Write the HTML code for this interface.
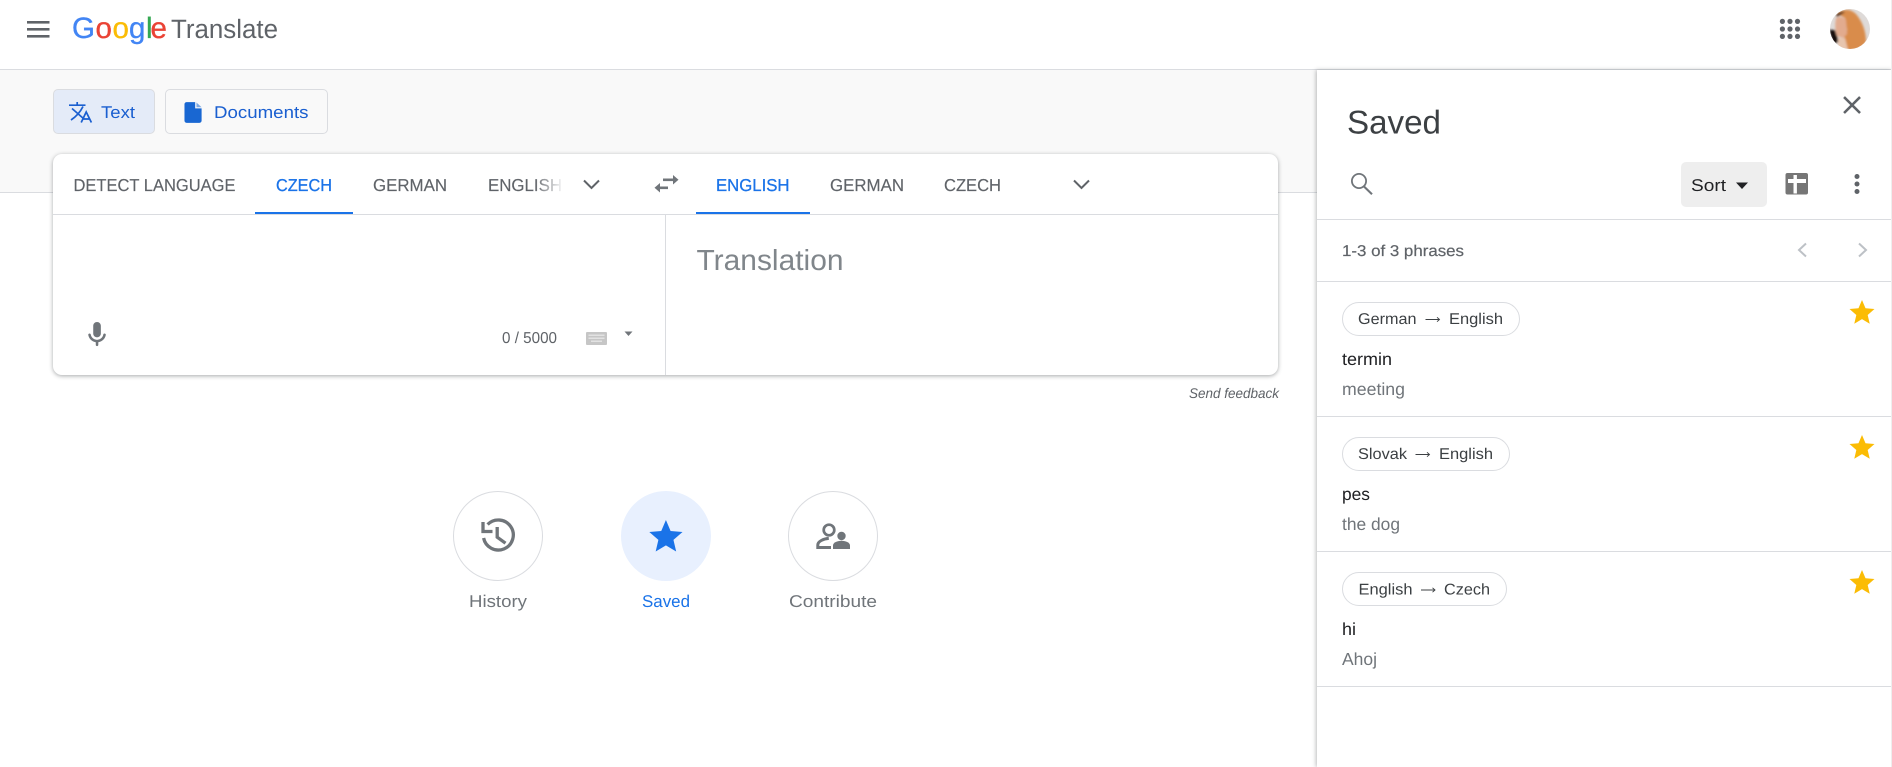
<!DOCTYPE html>
<html lang="en">
<head>
<meta charset="utf-8">
<title>Google Translate</title>
<style>
html,body{margin:0;padding:0;background:#fff}
#page{position:relative;width:1892px;height:767px;overflow:hidden;background:#fff;font-family:"Liberation Sans",sans-serif}
#page div{position:absolute;box-sizing:border-box}
.hdr{left:0;top:0;width:1892px;height:70px;background:#fff;border-bottom:1px solid #dadce0}
.band{left:0;top:70px;width:1317px;height:123px;background:#f9f9f9;border-bottom:1px solid #dadce0}
.btn{top:89px;height:45px;border:1px solid #dadce0;border-radius:5px;background:#f9f9f9}
.card{left:53px;top:154px;width:1225px;height:221px;background:#fff;border-radius:9px;box-shadow:0 1px 4px rgba(60,64,67,.45)}
.panel{left:1317px;top:70px;width:575px;height:697px;background:#fff;box-shadow:-1px 0 4px rgba(60,64,67,.35)}
.circ{top:491px;width:90px;height:90px;border-radius:50%;border:1px solid #dadce0;background:#fff}
.chip{left:1342px;height:34px;border:1px solid #dadce0;border-radius:17px;background:#fff}
.hl{left:1317px;width:575px;height:1px;background:#dadce0}
svg{position:absolute;left:0;top:0}
text{font-family:"Liberation Sans",sans-serif;text-rendering:geometricPrecision}
</style>
</head>
<body>
<div id="page">
  <div class="band"></div>
  <div class="hdr"></div>
  <div class="btn" style="left:53px;width:102px;background:#e4ebf8"></div>
  <div class="btn" style="left:165px;width:163px"></div>
  <div class="card"></div>
  <div style="left:53px;top:214px;width:1225px;height:1px;background:#dadce0"></div>
  <div style="left:665px;top:215px;width:1px;height:160px;background:#dadce0"></div>
  <div style="left:255px;top:212px;width:98px;height:2px;background:#1a73e8"></div>
  <div style="left:696px;top:212px;width:114px;height:2px;background:#1a73e8"></div>
  <div class="circ" style="left:453px"></div>
  <div class="circ" style="left:621px;background:#e8f0fe;border-color:#e8f0fe"></div>
  <div class="circ" style="left:788px"></div>
  <div class="panel"></div>
  <div class="hl" style="top:219px"></div>
  <div class="hl" style="top:281px"></div>
  <div class="hl" style="top:416px"></div>
  <div class="hl" style="top:551px"></div>
  <div class="hl" style="top:686px"></div>
  <div style="left:1681px;top:162px;width:86px;height:45px;background:#eeeeee;border-radius:5px"></div>
  <div class="chip" style="top:302px;width:178px"></div>
  <div class="chip" style="top:437px;width:168px"></div>
  <div class="chip" style="top:572px;width:165px"></div>
  <div style="left:1891px;top:0;width:1px;height:767px;background:#eeeeee"></div>

  <svg width="1892" height="767" viewBox="0 0 1892 767" xmlns="http://www.w3.org/2000/svg">
    <defs>
      <linearGradient id="fade" x1="0" x2="1" y1="0" y2="0">
        <stop offset="0" stop-color="#fff" stop-opacity="0"/>
        <stop offset="1" stop-color="#fff"/>
      </linearGradient>
      <clipPath id="av"><circle cx="1850" cy="29" r="20"/></clipPath>
      <filter id="bl" x="-20%" y="-20%" width="140%" height="140%"><feGaussianBlur stdDeviation="1"/></filter>
    </defs>

    <!-- header -->
    <g fill="#5f6368">
      <rect x="27" y="21" width="22.5" height="2.6"/>
      <rect x="27" y="28" width="22.5" height="2.6"/>
      <rect x="27" y="35" width="22.5" height="2.6"/>
    </g>
    <text y="38" font-size="29.5" stroke-width=".35">
      <tspan x="72" fill="#4285f4" stroke="#4285f4">G</tspan><tspan x="95.5" fill="#ea4335" stroke="#ea4335">o</tspan><tspan x="112.5" fill="#fbbc05" stroke="#fbbc05">o</tspan><tspan x="129" fill="#4285f4" stroke="#4285f4">g</tspan><tspan x="146" fill="#34a853" stroke="#34a853">l</tspan><tspan x="150.5" fill="#ea4335" stroke="#ea4335">e</tspan>
    </text>
    <text x="171" y="38" font-size="26.5" fill="#5f6368" textLength="107" lengthAdjust="spacingAndGlyphs">Translate</text>
    <g fill="#5f6368">
      <circle cx="1782.4" cy="21.4" r="2.6"/><circle cx="1790" cy="21.4" r="2.6"/><circle cx="1797.5" cy="21.4" r="2.6"/>
      <circle cx="1782.4" cy="29" r="2.6"/><circle cx="1790" cy="29" r="2.6"/><circle cx="1797.5" cy="29" r="2.6"/>
      <circle cx="1782.4" cy="36.4" r="2.6"/><circle cx="1790" cy="36.4" r="2.6"/><circle cx="1797.5" cy="36.4" r="2.6"/>
    </g>
    <g clip-path="url(#av)">
      <rect x="1830" y="9" width="40" height="40" fill="#dedad8"/>
      <g filter="url(#bl)">
        <path d="M1829 30 L1835 30 L1839 42 L1833 44 Z" fill="#17110e"/>
        <path d="M1836 13 Q1848 6 1856 14 Q1866 26 1866 42 Q1860 52 1846 50 L1843 40 L1847 30 L1845 18 Z" fill="#d98c4c"/>
        <path d="M1836 18 Q1842 15 1846 20 L1847 34 L1843 38 L1837 36 Q1834 28 1836 18 Z" fill="#e2ab8e"/>
        <path d="M1838 38 L1845 38 L1848 50 L1838 50 Z" fill="#e7c5ae"/>
        <path d="M1836 15 Q1840 11 1845 12 Q1842 14 1837 17 Z" fill="#4a2a1a"/>
      </g>
    </g>

    <!-- mode buttons -->
    <g fill="none" stroke="#1a5fd0" stroke-width="1.7">
      <path d="M69 105.2H85.5M77.2 102V105.2"/>
      <path d="M72 108.5L84 119M83 106.5C80.5 111.5 77 116 71 120"/>
      <path d="M81.2 122.5L86.2 112L91.4 122.5M83 119H89.6"/>
    </g>
    <text x="101" y="118" font-size="17" fill="#1a5fd0" textLength="34" lengthAdjust="spacingAndGlyphs">Text</text>
    <g transform="translate(180.2 100) scale(1.07 1.04)" fill="#1967d2"><path d="M14 2H6c-1.1 0-2 .9-2 2v16c0 1.1.9 2 2 2h12c1.1 0 2-.9 2-2V8h-6V2z"/><path d="M15.2 2.4L20 7h-4.8z" opacity=".55"/></g>
    <text x="214" y="118" font-size="17" fill="#1a5fd0" textLength="94.5" lengthAdjust="spacingAndGlyphs">Documents</text>

    <!-- tabs -->
    <g font-size="17.2" fill="#5f6368" stroke="#5f6368" stroke-width=".15">
      <text x="73.5" y="191" textLength="162" lengthAdjust="spacingAndGlyphs">DETECT LANGUAGE</text>
      <text x="373" y="191" textLength="74" lengthAdjust="spacingAndGlyphs">GERMAN</text>
      <text x="488" y="191" textLength="74" lengthAdjust="spacingAndGlyphs">ENGLISH</text>
      <text x="830" y="191" textLength="74" lengthAdjust="spacingAndGlyphs">GERMAN</text>
      <text x="944" y="191" textLength="57" lengthAdjust="spacingAndGlyphs">CZECH</text>
    </g>
    <g font-size="17.2" fill="#1a73e8" stroke="#1a73e8" stroke-width=".3">
      <text x="276" y="191" textLength="56" lengthAdjust="spacingAndGlyphs">CZECH</text>
      <text x="716" y="191" textLength="73.5" lengthAdjust="spacingAndGlyphs">ENGLISH</text>
    </g>
    <rect x="534" y="170" width="30" height="30" fill="url(#fade)"/>
    <polyline points="584,180.5 591.5,188 599,180.5" fill="none" stroke="#5f6368" stroke-width="2"/>
    <polyline points="1074,180.5 1081.5,188 1089,180.5" fill="none" stroke="#5f6368" stroke-width="2"/>
    <g fill="#70757a">
      <rect x="663" y="178.5" width="11" height="2.6"/>
      <polygon points="673,175 678.5,179.8 673,184.5"/>
      <rect x="659" y="186.5" width="9" height="2.6"/>
      <polygon points="660,183 654.5,187.8 660,192.5"/>
    </g>

    <!-- text areas -->
    <text x="696.5" y="270" font-size="29" fill="#80868b" textLength="147" lengthAdjust="spacingAndGlyphs">Translation</text>
    <g transform="translate(81.8 319.5) scale(1.27)" fill="#70757a"><path d="M12 14c1.66 0 3-1.34 3-3V5c0-1.66-1.34-3-3-3S9 3.34 9 5v6c0 1.66 1.34 3 3 3zm5.91-3c-.49 0-.9.36-.98.85C16.52 14.2 14.47 16 12 16s-4.52-1.8-4.93-4.15c-.08-.49-.49-.85-.98-.85-.61 0-1.09.54-1 1.14.49 3 2.89 5.35 5.91 5.78V20c0 .55.45 1 1 1s1-.45 1-1v-2.08c3.02-.43 5.42-2.78 5.91-5.78.1-.6-.39-1.14-1-1.14z"/></g>
    <text x="502" y="343" font-size="15.8" fill="#5f6368" textLength="55" lengthAdjust="spacingAndGlyphs">0 / 5000</text>
    <rect x="586" y="332" width="21" height="13" rx="1" fill="#c6c6c6"/>
    <g fill="#e2e2e2"><rect x="588.5" y="334.5" width="16" height="1.5"/><rect x="588.5" y="337.5" width="16" height="1.5"/><rect x="591" y="340.5" width="11" height="1.5"/></g>
    <polygon points="624.5,331.5 632.5,331.5 628.5,336" fill="#70757a"/>
    <text x="1189" y="398" font-size="14" font-style="italic" fill="#5f6368" textLength="90" lengthAdjust="spacingAndGlyphs">Send feedback</text>

    <!-- bottom shortcuts -->
    <g fill="none" stroke="#70757a" stroke-width="3.3">
      <path d="M487.6 524.5 A15 15 0 1 1 483.6 538"/>
      <polyline points="483,522 483,531.5 492.5,531.5"/>
      <polyline points="497.2,527 497.2,537.2 505.5,543.2"/>
    </g>
    <g transform="translate(646 516.7) scale(1.66)" fill="#1a73e8"><path d="M12 17.27L18.18 21l-1.64-7.03L22 9.24l-7.19-.61L12 2 9.19 8.63 2 9.24l5.46 4.73L5.82 21z"/></g>
    <circle cx="829" cy="530" r="5.3" fill="none" stroke="#70757a" stroke-width="2.7"/>
    <path d="M831 547.5H817.8v-2.5c0-3.6 5.6-6.2 11-6.6" fill="none" stroke="#70757a" stroke-width="3"/>
    <circle cx="841.5" cy="536" r="4.2" fill="#70757a"/>
    <path d="M833 549v-3.5c0-3 4.5-4.7 8.5-4.7s8.5 1.7 8.5 4.7V549z" fill="#70757a"/>
    <g font-size="17">
      <text x="469" y="607" fill="#70757a" textLength="58" lengthAdjust="spacingAndGlyphs">History</text>
      <text x="642" y="607" fill="#1a73e8" textLength="48" lengthAdjust="spacingAndGlyphs">Saved</text>
      <text x="789" y="607" fill="#70757a" textLength="88" lengthAdjust="spacingAndGlyphs">Contribute</text>
    </g>

    <!-- saved panel -->
    <text x="1347" y="133.5" font-size="33" fill="#3c4043" textLength="94" lengthAdjust="spacingAndGlyphs">Saved</text>
    <g transform="translate(1836.8 89.8) scale(1.27)" fill="#5f6368"><path d="M19 6.41L17.59 5 12 10.59 6.41 5 5 6.41 10.59 12 5 17.59 6.41 19 12 13.41 17.59 19 19 17.59 13.41 12z"/></g>
    <circle cx="1359" cy="181" r="7.1" fill="none" stroke="#70757a" stroke-width="1.8"/>
    <line x1="1364" y1="186.5" x2="1372" y2="194.2" stroke="#70757a" stroke-width="2.1"/>
    <text x="1691" y="191" font-size="17" fill="#202124" textLength="35" lengthAdjust="spacingAndGlyphs">Sort</text>
    <polygon points="1736,182.5 1748,182.5 1742,189" fill="#202124"/>
    <rect x="1785.5" y="173" width="22.5" height="21.5" rx="2" fill="#767676"/>
    <rect x="1788" y="179" width="18" height="4" fill="#fff"/>
    <rect x="1793.5" y="175" width="3.4" height="18.5" fill="#fff"/>
    <g fill="#5f6368"><circle cx="1857" cy="176.5" r="2.5"/><circle cx="1857" cy="184" r="2.5"/><circle cx="1857" cy="191.5" r="2.5"/></g>
    <text x="1342" y="256" font-size="15.6" fill="#5f6368" stroke="#5f6368" stroke-width=".2" textLength="122" lengthAdjust="spacingAndGlyphs">1-3 of 3 phrases</text>
    <polyline points="1806,243.5 1799,250 1806,256.5" fill="none" stroke="#bdc1c6" stroke-width="2"/>
    <polyline points="1859,243.5 1866,250 1859,256.5" fill="none" stroke="#bdc1c6" stroke-width="2"/>

    <!-- chips -->
    <g font-size="15.6" fill="#3c4043">
      <text x="1358" y="324" textLength="58.5" lengthAdjust="spacingAndGlyphs">German</text>
      <text x="1449" y="324" textLength="54" lengthAdjust="spacingAndGlyphs">English</text>
      <text x="1358" y="459" textLength="49" lengthAdjust="spacingAndGlyphs">Slovak</text>
      <text x="1439" y="459" textLength="54" lengthAdjust="spacingAndGlyphs">English</text>
      <text x="1358.5" y="594.5" textLength="54" lengthAdjust="spacingAndGlyphs">English</text>
      <text x="1444" y="594.5" textLength="46" lengthAdjust="spacingAndGlyphs">Czech</text>
    </g>
    <g fill="none" stroke="#3c4043" stroke-width=".9">
      <path d="M1425.5 319.5h14m-2.5-2.2l2.5 2.2-2.5 2.2"/>
      <path d="M1415.5 454.5h14m-2.5-2.2l2.5 2.2-2.5 2.2"/>
      <path d="M1421 590h14m-2.5-2.2l2.5 2.2-2.5 2.2"/>
    </g>

    <!-- phrases -->
    <g font-size="17.4" fill="#202124">
      <text x="1342" y="365" textLength="50" lengthAdjust="spacingAndGlyphs">termin</text>
      <text x="1342" y="500" textLength="28" lengthAdjust="spacingAndGlyphs">pes</text>
      <text x="1342" y="635" textLength="14" lengthAdjust="spacingAndGlyphs">hi</text>
    </g>
    <g font-size="17.4" fill="#70757a">
      <text x="1342" y="395" textLength="63" lengthAdjust="spacingAndGlyphs">meeting</text>
      <text x="1342" y="530" textLength="58" lengthAdjust="spacingAndGlyphs">the dog</text>
      <text x="1342" y="665" textLength="35" lengthAdjust="spacingAndGlyphs">Ahoj</text>
    </g>
    <g fill="#fbbc04">
      <path transform="translate(1847 297.5) scale(1.25)" d="M12 17.27L18.18 21l-1.64-7.03L22 9.24l-7.19-.61L12 2 9.19 8.63 2 9.24l5.46 4.73L5.82 21z"/>
      <path transform="translate(1847 432.5) scale(1.25)" d="M12 17.27L18.18 21l-1.64-7.03L22 9.24l-7.19-.61L12 2 9.19 8.63 2 9.24l5.46 4.73L5.82 21z"/>
      <path transform="translate(1847 567.5) scale(1.25)" d="M12 17.27L18.18 21l-1.64-7.03L22 9.24l-7.19-.61L12 2 9.19 8.63 2 9.24l5.46 4.73L5.82 21z"/>
    </g>
  </svg>
</div>
</body>
</html>
